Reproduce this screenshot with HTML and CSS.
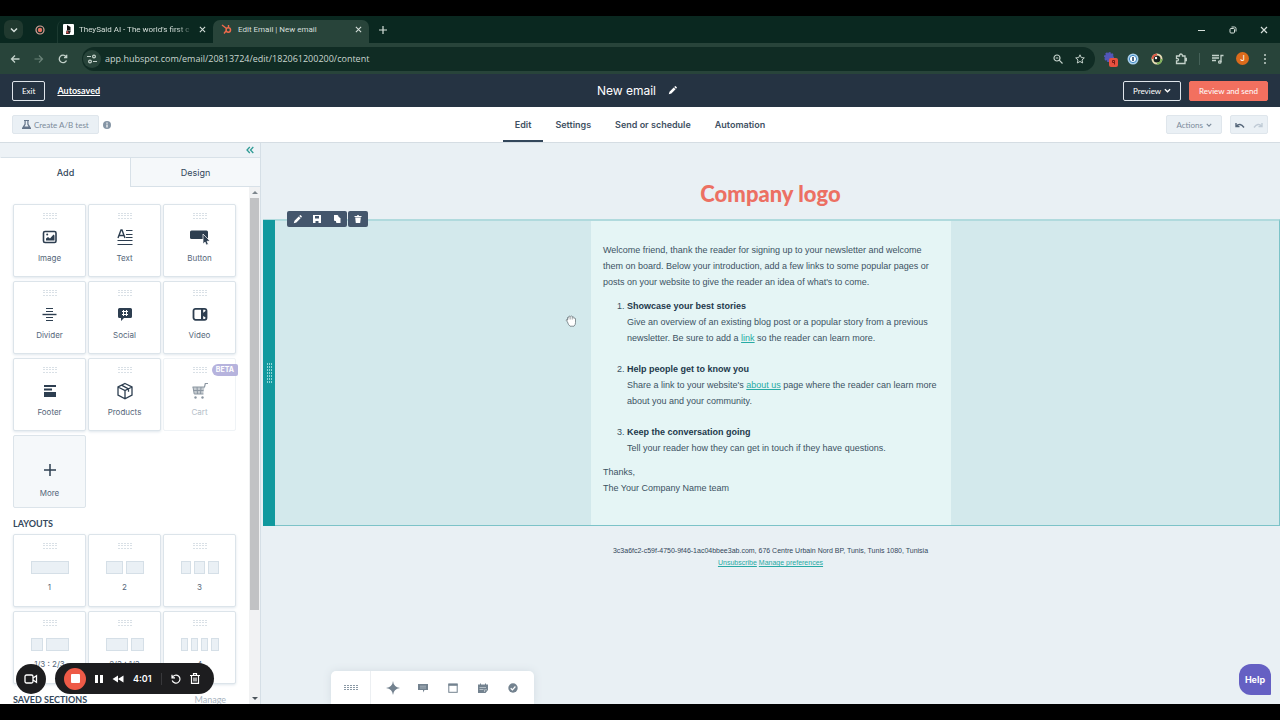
FILE: index.html
```html
<!DOCTYPE html>
<html lang="en">
<head>
    <meta charset="UTF-8">
    <meta name="viewport" content="width=device-width, initial-scale=1.0">
    <title>Edit Email | New email</title>
    <link rel="stylesheet" href="styles.css">
</head>
<body>
    <!-- Shared icons -->
    <svg class="sprite" aria-hidden="true">
        <symbol id="grip" viewBox="0 0 14 6">
            <path d="M0 .5h14M0 2.500h14M0 5.500h14" stroke="#d9e0e6" stroke-width="1" stroke-dasharray="2 1"/>
        </symbol>
        <symbol id="pencil" viewBox="0 0 12 12">
            <path d="M1 11l1-3.500 5.600-5.600 2.500 2.500L4.500 10zM8.300 1.200l1-.9q.7-.4 1.300.2l.9.9q.6.6.1 1.300l-.9 1z" fill="currentColor"/>
        </symbol>
        <symbol id="chevron" viewBox="0 0 8 8">
            <path d="M1 2.500l3 3 3-3" fill="none" stroke="currentColor" stroke-width="1.500"/>
        </symbol>
        <symbol id="close" viewBox="0 0 8 8">
            <path d="M1 1l6 6M7 1L1 7" stroke="currentColor" stroke-width="1.200"/>
        </symbol>
    </svg>

    <div class="tab-strip">
        <button class="tab-search" aria-label="Search tabs"><svg width="8" height="8"><use href="#chevron"/></svg></button>
        <svg class="pinned" width="10" height="10" viewBox="0 0 10 10"><circle cx="5" cy="5" r="4" fill="none" stroke="#d9a59c" stroke-width="1.200"/><circle cx="5" cy="5" r="2.200" fill="#e8705f"/></svg>
        <div class="tab">
            <svg width="11" height="11" viewBox="0 0 11 11"><rect width="11" height="11" rx="1" fill="#fff"/><path d="M4 1l3.500 2v3L4 6.500z" fill="#111"/><path d="M3.500 6.500h4.500L6.500 10H3z" fill="#222"/><path d="M3 9l1.500-2.500L6 9.500z" fill="#c44"/></svg>
            <span class="tab-title faded">TheySaid AI - The world's first c</span>
            <button aria-label="Close tab"><svg width="7" height="7"><use href="#close"/></svg></button>
        </div>
        <div class="tab active">
            <svg width="11" height="11" viewBox="0 0 11 11" fill="none" stroke="#ef6a4c"><path d="M1 1l4.500 3.500M7.500 1v2.500M5 7l-2 2.500" stroke-width="1.400"/><circle cx="7.300" cy="6" r="2.200" stroke-width="1.500"/></svg>
            <span class="tab-title">Edit Email | New email</span>
            <button aria-label="Close tab"><svg width="7" height="7"><use href="#close"/></svg></button>
        </div>
        <button class="new-tab" aria-label="New tab"><svg width="8" height="8" viewBox="0 0 8 8"><path d="M4 0v8M0 4h8" stroke="currentColor" stroke-width="1.200"/></svg></button>
        <div class="window-buttons">
            <button aria-label="Minimize"><svg width="8" height="8" viewBox="0 0 8 8"><path d="M0 4.500h7" stroke="currentColor"/></svg></button>
            <button aria-label="Restore"><svg width="8" height="8" viewBox="0 0 8 8" fill="none" stroke="currentColor"><rect x="1" y="2.500" width="4.500" height="4.500" rx="1"/><path d="M2.500 1h3q1.500 0 1.500 1.500v3"/></svg></button>
            <button aria-label="Close"><svg width="8" height="8"><use href="#close"/></svg></button>
        </div>
    </div>

    <div class="browser-bar">
        <button aria-label="Back"><svg width="10" height="10" viewBox="0 0 10 10" fill="none" stroke="currentColor" stroke-width="1.300"><path d="M9.500 5H1.500M5 1.500L1.500 5 5 8.500"/></svg></button>
        <button class="dim" aria-label="Forward"><svg width="10" height="10" viewBox="0 0 10 10" fill="none" stroke="currentColor" stroke-width="1.200"><path d="M.5 5h8M5 1.500L8.500 5 5 8.500"/></svg></button>
        <button aria-label="Reload"><svg width="10" height="10" viewBox="0 0 10 10" fill="none" stroke="currentColor" stroke-width="1.300"><path d="M8.500 6.500A3.800 3.800 0 1 1 8 2.500M8.700.8v2.700H6"/></svg></button>
        <div class="address">
            <span class="site-info"><svg width="10" height="10" viewBox="0 0 10 10" fill="none" stroke="currentColor" stroke-width="1.200"><path d="M0 2.500h4M6 7.500h4"/><circle cx="7" cy="2.500" r="1.400"/><circle cx="3" cy="7.500" r="1.400"/></svg></span>
            <input type="text" aria-label="Address" value="app.hubspot.com/email/20813724/edit/182061200200/content">
            <button aria-label="Zoom"><svg width="10" height="10" viewBox="0 0 10 10" fill="none" stroke="currentColor" stroke-width="1.200"><circle cx="4" cy="4" r="3"/><path d="M6.200 6.200l3.300 3.300M2.700 4h2.600"/></svg></button>
            <button aria-label="Bookmark"><svg width="10" height="10" viewBox="0 0 10 10" fill="none" stroke="currentColor"><path d="M5 .8l1.300 2.800 3 .3L7 6l.7 3L5 7.500 2.300 9 3 6 .7 3.900l3-.3z"/></svg></button>
        </div>
        <div class="extensions">
            <svg class="badged" width="16" height="16" viewBox="0 0 16 16"><circle cx="6" cy="6" r="4" fill="#5357b8" stroke="#5357b8" stroke-dasharray="2 1" stroke-width="2"/><rect x="6" y="7" width="9" height="9" rx="2" fill="#e8503f"/><path d="M9.500 9.500h2v4M9.500 9.500v2h2" fill="none" stroke="#7a1c16"/></svg>
            <svg width="12" height="12" viewBox="0 0 12 12"><circle cx="6" cy="6" r="5.500" fill="#a9d0ec"/><circle cx="6" cy="6" r="3.600" fill="#fff" stroke="#3b86c4"/><path d="M6 4v4" stroke="#17395c" stroke-width="1.500"/></svg>
            <svg width="12" height="12" viewBox="0 0 12 12"><circle cx="6" cy="6" r="4.500" fill="#16231f" stroke="#e6dcb4" stroke-width="2"/><path d="M1.500 6A4.500 4.500 0 0 1 6 1.500" fill="none" stroke="#dc5a47" stroke-width="2"/><path d="M10.500 6A4.500 4.500 0 0 1 6 10.500" fill="none" stroke="#7db35a" stroke-width="2"/><circle cx="5" cy="5" r="1.200" fill="#fff"/></svg>
            <svg width="12" height="12" viewBox="0 0 12 12" fill="none" stroke="#c4d2cb" stroke-width="1.300"><path d="M1.500 3h3q0-2 1.500-2t1.500 2H10v7.500H1.500V8q2 0 2-1.300t-2-1.200zM10 5.500h1.300v2H10"/></svg>
            <i class="divider"></i>
            <svg width="12" height="12" viewBox="0 0 12 12" fill="none" stroke="#c4d2cb" stroke-width="1.300"><path d="M0 2.500h7M0 5h7M0 7.500h4M9 9V2.500h2.500"/><circle cx="7.800" cy="9" r="1.200"/></svg>
            <span class="avatar">J</span>
            <svg width="8" height="12" viewBox="0 0 8 12" fill="#c4d2cb"><circle cx="4" cy="2" r="1"/><circle cx="4" cy="6" r="1"/><circle cx="4" cy="10" r="1"/></svg>
        </div>
    </div>

    <header class="app-header">
        <div class="header-left">
            <button class="outline-btn">Exit</button>
            <a class="autosaved" href="#">Autosaved</a>
        </div>
        <h1>New email <svg width="9" height="9"><use href="#pencil"/></svg></h1>
        <div class="header-right">
            <button class="outline-btn">Preview <svg width="7" height="7"><use href="#chevron"/></svg></button>
            <button class="send-btn">Review and send</button>
        </div>
    </header>

    <div class="sub-header">
        <div class="sub-left">
            <button class="muted-btn"><svg width="9" height="9" viewBox="0 0 9 9" fill="#65758a"><path d="M2 0h5v1H6.500v3L9 8v1H0V8l2.500-4V1H2zM3.700 1v3.500L2.500 6.500h4L5.300 4.500V1z"/></svg>Create A/B test</button>
            <svg width="8" height="8" viewBox="0 0 8 8"><circle cx="4" cy="4" r="4" fill="#8595a5"/><path d="M4 3.500V6.500M4 1.500v1.200" stroke="#fff" stroke-width="1.200"/></svg>
        </div>
        <nav>
            <a class="current" href="#">Edit</a>
            <a href="#">Settings</a>
            <a href="#">Send or schedule</a>
            <a href="#">Automation</a>
        </nav>
        <div class="sub-right">
            <button class="muted-btn">Actions <svg width="6" height="6"><use href="#chevron"/></svg></button>
            <div class="history">
                <button aria-label="Undo"><svg width="10" height="8" viewBox="0 0 10 8" fill="none" stroke="#56677a" stroke-width="1.400"><path d="M1 2v3.500h3.500M1.200 5.300Q5 1 9 6.500"/></svg></button>
                <button aria-label="Redo"><svg width="10" height="8" viewBox="0 0 10 8" fill="none" stroke="#c0cbd6" stroke-width="1.400"><path d="M9 2v3.500H5.500M8.800 5.300Q5 1 1 6.500"/></svg></button>
            </div>
        </div>
    </div>

    <div class="workspace">
        <aside class="sidebar">
            <div class="collapse"><button aria-label="Collapse"><svg width="8" height="8" viewBox="0 0 8 8" fill="none" stroke="#2f9b95" stroke-width="1.300"><path d="M3.800 1L1 4l2.800 3M7.300 1L4.500 4l2.800 3"/></svg></button></div>
            <div class="side-tabs">
                <button class="selected">Add</button>
                <button>Design</button>
            </div>
            <div class="side-body">
                <div class="modules">
                    <div class="tiles">
                        <button class="tile"><svg class="grip"><use href="#grip"/></svg>
                            <svg class="icon" viewBox="0 0 20 20"><rect x="3.500" y="4.500" width="12.500" height="11" rx="1.500" fill="none" stroke="currentColor" stroke-width="1.600"/><path d="M6 13.500v-2l2-1.500 2 1.500 3.500-4 1 1v5z"/><circle cx="7.200" cy="7.500" r="1"/></svg>Image</button>
                        <button class="tile"><svg class="grip"><use href="#grip"/></svg>
                            <svg class="icon" viewBox="0 0 20 20" fill="none" stroke="currentColor"><path d="M3 11L6 3h1l3 8M4.300 8.500h4.400" stroke-width="1.400"/><path d="M11 3.500h6.500M11 7.500h6.500M11 10.500h6.500M2.500 13.500h15M2.500 17.500h15"/></svg>Text</button>
                        <button class="tile"><svg class="grip"><use href="#grip"/></svg>
                            <svg class="icon" viewBox="0 0 20 20"><rect x="0" y="3.500" width="18" height="8.500" rx="1.500"/><path d="M13 7l7 7-3 .3 1.300 2.900-2 .9-1.200-3-2.100 1.900z" stroke="#fff" stroke-width=".7"/></svg>Button</button>
                        <button class="tile"><svg class="grip"><use href="#grip"/></svg>
                            <svg class="icon" viewBox="0 0 20 20" fill="none" stroke="currentColor"><path d="M6 4.500h7M6 7.500h7M6 13.500h7M6 16.500h7"/><path d="M2.500 10.500h14" stroke-width="1.400"/></svg>Divider</button>
                        <button class="tile"><svg class="grip"><use href="#grip"/></svg>
                            <svg class="icon" viewBox="0 0 20 20"><path d="M4.500 4h11q1.500 0 1.500 1.500v7q0 1.500-1.500 1.500H9l-3 3v-3H4.500Q3 14 3 12.500v-7Q3 4 4.500 4z"/><path d="M8.500 6v6M11.500 6v6M7 7.500h6M7 10.500h6" stroke="#fff" stroke-width="1"/></svg>Social</button>
                        <button class="tile"><svg class="grip"><use href="#grip"/></svg>
                            <svg class="icon" viewBox="0 0 20 20"><rect x="3.500" y="4.800" width="13" height="11" rx="2" fill="none" stroke="currentColor" stroke-width="1.800"/><path d="M11 4.500h2.200v4.200L16 6.800v7l-2.800-1.900V16H11z"/></svg>Video</button>
                        <button class="tile"><svg class="grip"><use href="#grip"/></svg>
                            <svg class="icon" viewBox="0 0 20 20"><path d="M4 4h12v2H4zM4 7.500h8v2H4zM4 11h12v5H4z"/></svg>Footer</button>
                        <button class="tile"><svg class="grip"><use href="#grip"/></svg>
                            <svg class="icon" viewBox="0 0 20 20" fill="none" stroke="currentColor" stroke-width="1.300"><path d="M10 2.500l7 3.500v8l-7 3.700L3 14V6zM3 6l7 3.500L17 6M10 9.500v8M6.500 4.200l7 3.600v3"/></svg>Products</button>
                        <button class="tile disabled" disabled><svg class="grip"><use href="#grip"/></svg>
                            <svg class="icon" viewBox="0 0 20 20"><path d="M2.500 6h12l.8-3.500H18" fill="none" stroke="currentColor" stroke-width="1.200"/><path d="M3 6h11.500l-1.300 7H4.200z" fill-opacity=".5"/><path d="M3 6l1.200 7h9.300M7 6l.5 7M11 6l-.5 7M3.500 9.500h10" fill="none" stroke="currentColor"/><circle cx="5.500" cy="16.500" r="1.200"/><circle cx="12.500" cy="16.500" r="1.200"/></svg>Cart
                            <span class="beta">BETA</span></button>
                        <button class="tile more">
                            <svg class="icon" viewBox="0 0 20 20"><path d="M10 4v12M4 10h12" stroke="currentColor" stroke-width="1.500"/></svg>More</button>
                    </div>

                    <h2>LAYOUTS</h2>
                    <div class="tiles">
                        <button class="tile layout"><svg class="grip"><use href="#grip"/></svg><span class="cols"><i></i></span>1</button>
                        <button class="tile layout"><svg class="grip"><use href="#grip"/></svg><span class="cols"><i></i><i></i></span>2</button>
                        <button class="tile layout"><svg class="grip"><use href="#grip"/></svg><span class="cols"><i></i><i></i><i></i></span>3</button>
                        <button class="tile layout"><svg class="grip"><use href="#grip"/></svg><span class="cols"><i></i><i class="wide"></i></span>1/3 : 2/3</button>
                        <button class="tile layout"><svg class="grip"><use href="#grip"/></svg><span class="cols"><i class="wide"></i><i></i></span>2/3 : 1/3</button>
                        <button class="tile layout"><svg class="grip"><use href="#grip"/></svg><span class="cols"><i></i><i></i><i></i><i></i></span>4</button>
                    </div>

                    <h2>SAVED SECTIONS <a href="#">Manage</a></h2>
                </div>
                <div class="scrollbar"><i class="up"></i><div class="thumb"></div><i class="down"></i></div>
            </div>
        </aside>

        <main class="canvas">
            <div class="logo">Company logo</div>

            <section class="section">
                <div class="drag-handle"><svg width="5" height="20" viewBox="0 0 5 20"><path d="M.5 0v20M2.500 0v20M4.500 0v20" stroke="#8fd6d7" stroke-width="1" stroke-dasharray="2 1"/></svg></div>
                <div class="section-tools">
                    <div class="tool-group">
                        <button aria-label="Edit section"><svg width="9" height="9"><use href="#pencil"/></svg></button>
                        <button aria-label="Save section"><svg width="8" height="8" viewBox="0 0 8 8"><path d="M0 0h8v8H0z" fill="currentColor"/><path d="M2 1h4v2.500H2zM2.500 6h3v2h-3z" fill="#44566c"/></svg></button>
                        <button aria-label="Clone section"><svg width="8" height="8" viewBox="0 0 8 8" fill="currentColor"><path d="M1 0h3.500l1 1v5H2Q1 6 1 5z"/><path d="M3 2h3l1.500 1.500V8H4Q3 8 3 7z"/></svg></button>
                    </div>
                    <div class="tool-group">
                        <button aria-label="Delete section"><svg width="8" height="8" viewBox="0 0 8 8" fill="currentColor"><path d="M.5 1H3l.5-1h1L5 1h2.500v1h-7zM1.200 2.500h5.600L6.200 8H1.800z"/></svg></button>
                    </div>
                </div>
                <article class="email-body">
                    <p>Welcome friend, thank the reader for signing up to your newsletter and welcome them on board. Below your introduction, add a few links to some popular pages or posts on your website to give the reader an idea of what's to come.</p>
                    <ol>
                        <li><strong>Showcase your best stories</strong><br>Give an overview of an existing blog post or a popular story from a previous newsletter. Be sure to add a <a href="#">link</a> so the reader can learn more.</li>
                        <li><strong>Help people get to know you</strong><br>Share a link to your website's <a href="#">about us</a> page where the reader can learn more about you and your community.</li>
                        <li><strong>Keep the conversation going</strong><br>Tell your reader how they can get in touch if they have questions.</li>
                    </ol>
                    <p>Thanks,<br>The Your Company Name team</p>
                </article>
                <svg class="hand" width="12" height="12" viewBox="0 0 12 12"><path d="M2.500 7L1 5.200q.5-1 1.500 0V2.500q.8-1 1.500 0V1.500q.9-1 1.700 0 .9-1 1.700 0v.7q1-.7 1.500.3v.8q1.200-.7 1.600.4v4q0 2-1.500 3.500H5Q3 9.500 2.500 7z" fill="#fff" stroke="#59666b" stroke-width=".7"/><path d="M4 2.500v2M5.700 2v2.500M7.400 2.200v2.300" stroke="#59666b" stroke-width=".5"/></svg>
            </section>

            <footer class="email-footer">
                3c3a6fc2-c59f-4750-9f46-1ac04bbee3ab.com, 676 Centre Urbain Nord BP, Tunis, Tunis 1080, Tunisia<br>
                <a href="#">Unsubscribe</a> <a href="#">Manage preferences</a>
            </footer>

            <div class="dock">
                <span class="dock-grip"><svg width="14" height="5" viewBox="0 0 14 5"><path d="M0 .5h14M0 2.500h14M0 4.500h14" stroke="#8b99a5" stroke-dasharray="2 1"/></svg></span>
                <button aria-label="AI assistant"><svg width="14" height="14" viewBox="0 0 14 14" fill="currentColor"><path d="M7 0q.5 6 7 7-6.500 1-7 7-.5-6-7-7 6.500-1 7-7z"/><path d="M7 3.500L10 7l-3 3.500L4 7z"/></svg></button>
                <button aria-label="Comments"><svg width="10" height="10" viewBox="0 0 10 10"><path d="M0 1h10v6H6.500L5 9.500V7H0z" fill="currentColor"/><path d="M2 3.200h6M2 5h6" stroke="#c7d0d7" stroke-width=".6"/></svg></button>
                <button aria-label="Calendar"><svg width="10" height="10" viewBox="0 0 10 10" fill="none" stroke="currentColor"><rect x=".8" y="1" width="8.400" height="8.300"/><path d="M.5 1.800h9" stroke-width="2"/></svg></button>
                <button aria-label="Notes"><svg width="10" height="10" viewBox="0 0 10 10"><path d="M0 1.500h2V.5h1v1h4v-1h1v1h2V7L7.500 10H0z" fill="currentColor"/><path d="M1.500 4.500h6.500M1.500 6.500h4M6.500 9V6.800H9" stroke="#dfe5ea" stroke-width=".6" fill="none"/></svg></button>
                <button aria-label="Tasks"><svg width="10" height="10" viewBox="0 0 10 10"><circle cx="5" cy="5" r="4.700" fill="currentColor"/><path d="M2.700 5.200l1.700 1.600 3-3.300" fill="none" stroke="#fff" stroke-width="1.200"/></svg></button>
            </div>
            <button class="help">Help</button>
        </main>

        <div class="recorder">
            <button class="camera" aria-label="Camera"><svg width="14" height="10" viewBox="0 0 14 10" fill="none" stroke="#fff" stroke-width="1.300"><rect x="1" y="1" width="8" height="8" rx="1.500"/><path d="M9 4l3.500-2.200v6.400L9 6"/></svg></button>
            <div class="controls">
                <button class="stop" aria-label="Stop"><i></i></button>
                <button aria-label="Pause"><svg width="8" height="8" viewBox="0 0 8 8" fill="#fff"><path d="M0 0h3v8H0zM5 0h3v8H5z"/></svg></button>
                <button aria-label="Rewind"><svg width="12" height="8" viewBox="0 0 12 8" fill="#fff"><path d="M6 .5v7L.5 4zM11.500.5v7L6 4z"/></svg></button>
                <span class="time">4:01</span>
                <i class="divider"></i>
                <button aria-label="Restart"><svg width="10" height="10" viewBox="0 0 10 10" fill="none" stroke="#fff" stroke-width="1.200"><path d="M1 .8v3h3M1.300 3.500A4 4 0 1 1 1.200 6.500"/></svg></button>
                <button aria-label="Discard"><svg width="10" height="11" viewBox="0 0 10 11" fill="none" stroke="#fff" stroke-width="1.200"><path d="M0 2.500h10M3.500 2V.7h3V2M1.500 3v7.300h7V3M4 4.500v4M6 4.500v4"/></svg></button>
            </div>
        </div>
    </div>
</body>
</html>
```
FILE: styles.css
```css
* {
    box-sizing: border-box;
}

body {
    margin: 0;
    padding: 16px 0;
    height: 100vh;
    display: flex;
    flex-direction: column;
    overflow: hidden;
    background-color: #000000;
    color: #33475b;
    font-family: Inter, "Open Sans", sans-serif;
    font-size: 8px;
}

button {
    margin: 0;
    padding: 0;
    border: 0;
    background: none;
    color: inherit;
    font: inherit;
    display: flex;
    align-items: center;
    justify-content: center;
    cursor: pointer;
}

svg {
    display: block;
    flex: none;
}

.sprite {
    position: absolute;
    width: 0;
    height: 0;
}

/* Browser */
.tab-strip {
    display: flex;
    align-items: center;
    flex: none;
    height: 27px;
    padding-left: 4px;
    background-color: #0a2820;
    color: #d5dfda;
    font-family: Roboto, sans-serif;
    font-size: 8px;
}

.tab-search {
    width: 19px;
    height: 19px;
    border-radius: 6px;
    background-color: #20392f;
}

.pinned {
    margin: 0 12px;
}

.tab {
    display: flex;
    align-items: center;
    gap: 5px;
    width: 156px;
    height: 23px;
    margin-top: 4px;
    padding: 0 7px 4px 5px;
    border-radius: 7px 7px 0 0;
}

.tab:not(.active) {
    border-left: 1px solid #1c3a31;
}

.tab.active {
    gap: 6px;
    padding-left: 8px;
    background-color: #28443a;
}

.tab-title {
    flex: 1;
    white-space: nowrap;
}

.faded {
    -webkit-mask-image: linear-gradient(to right, #000 85%, transparent);
    mask-image: linear-gradient(to right, #000 85%, transparent);
}

.new-tab {
    margin-left: 10px;
}

.window-buttons {
    display: flex;
    gap: 23px;
    margin-left: auto;
    padding-right: 12px;
}

.browser-bar {
    display: flex;
    align-items: center;
    flex: none;
    gap: 14px;
    height: 31px;
    padding: 0 11px 0 10px;
    background-color: #28443a;
    color: #c4d2cb;
}

.browser-bar .dim {
    color: #6b8379;
}

.address {
    display: flex;
    align-items: center;
    flex: 1;
    gap: 12px;
    height: 24px;
    margin-right: -6px;
    padding: 0 10px 0 1px;
    border-radius: 12px;
    background-color: #102c24;
}

.site-info {
    display: grid;
    place-items: center;
    width: 18px;
    height: 18px;
    margin-right: -8px;
    border-radius: 50%;
    background-color: #28443a;
}

.address input {
    flex: 1;
    min-width: 0;
    padding: 0;
    border: 0;
    outline: 0;
    background: none;
    color: #c9d6d0;
    font-family: "Open Sans", sans-serif;
    font-size: 9px;
}

.extensions {
    display: flex;
    align-items: center;
    gap: 12px;
}

.badged {
    margin-right: -4px;
}

.divider {
    width: 1px;
    height: 12px;
    background-color: #456158;
}

.avatar {
    width: 13px;
    height: 13px;
    border-radius: 50%;
    background-color: #dc6b1c;
    color: #ffffff;
    line-height: 13px;
    text-align: center;
}

/* App header */
.app-header,
.sub-header {
    display: grid;
    grid-template-columns: 1fr auto 1fr;
    align-items: center;
    flex: none;
    padding: 0 12px;
}

.app-header {
    height: 33px;
    background-color: #253342;
    color: #ffffff;
}

.header-left,
.header-right,
.sub-left,
.sub-right {
    display: flex;
    align-items: center;
    gap: 8px;
}

.header-left {
    gap: 12px;
}

.header-right,
.sub-right {
    justify-content: flex-end;
}

.app-header h1 {
    display: flex;
    align-items: center;
    gap: 12px;
    margin: 0;
    padding-right: 6px;
    font-size: 12px;
    font-weight: 400;
}

.outline-btn,
.send-btn,
.muted-btn {
    gap: 3px;
    height: 20px;
    padding: 0 9px;
    border: 1px solid #dfe5eb;
    border-radius: 2px;
    font-family: Lato, sans-serif;
}

.send-btn {
    border-color: #f2705f;
    background-color: #f2705f;
}

.autosaved {
    color: #ffffff;
    font-family: Lato, sans-serif;
    font-size: 9px;
    font-weight: 700;
}

.sub-header {
    height: 36px;
    border-bottom: 1px solid #d5dde3;
    background-color: #ffffff;
}

.sub-left {
    gap: 4px;
}

.muted-btn {
    height: 19px;
    border-color: #dfe6ec;
    background-color: #eaf0f5;
    color: #7c8b9b;
}

.history {
    display: flex;
    height: 19px;
    border: 1px solid #dfe6ec;
    border-radius: 2px;
    background-color: #eaf0f5;
}

.history button {
    width: 18px;
}

.sub-header nav {
    display: flex;
    align-self: stretch;
}

.sub-header nav a {
    height: 35px;
    padding: 0 12px;
    border-bottom: 2px solid transparent;
    color: #3f5163;
    font-size: 9px;
    font-weight: 600;
    line-height: 35px;
    text-decoration: none;
}

.sub-header nav .current {
    border-color: #33475b;
}

/* Sidebar */
.workspace {
    position: relative;
    display: flex;
    flex: 1;
    min-height: 0;
    background-color: #e9f0f4;
}

.sidebar {
    display: flex;
    flex-direction: column;
    flex: none;
    width: 261px;
    border-right: 1px solid #d5dfe6;
    background-color: #ffffff;
}

.collapse {
    display: flex;
    justify-content: flex-end;
    flex: none;
    height: 14px;
    padding-right: 6px;
    background-color: #edf2f6;
}

.side-tabs {
    display: flex;
    flex: none;
    height: 30px;
}

.side-tabs button {
    flex: 1;
    border: 1px solid #d8e1e8;
    border-right: 0;
    background-color: #f5f8fa;
    font-size: 9px;
}

.side-tabs .selected {
    border-color: #d8e1e8 transparent transparent;
    background-color: #ffffff;
    font-weight: 500;
}

.side-body {
    display: flex;
    flex: 1;
    min-height: 0;
}

.modules {
    flex: 1;
    padding: 17px 13px 0;
    overflow: hidden;
}

.tiles {
    display: grid;
    grid-template-columns: repeat(3, 73px);
    gap: 4px 2px;
}

.tile {
    position: relative;
    flex-direction: column;
    justify-content: flex-start;
    height: 73px;
    padding-top: 8px;
    border: 1px solid #dce4ea;
    border-radius: 2px;
    background-color: #ffffff;
    box-shadow: 0 1px 3px #dfe6ec;
    color: #56677a;
    line-height: 10px;
}

.grip {
    width: 14px;
    height: 6px;
}

.icon {
    width: 20px;
    height: 20px;
    margin: 8px 0 6px;
    fill: currentColor;
    color: #2d3e50;
}

.icon[fill="none"] {
    fill: none;
}

.tile.disabled {
    border-color: #eff3f6;
    box-shadow: none;
    color: #b4bec8;
}

.disabled .icon {
    color: #8c97a2;
}

.beta {
    position: absolute;
    top: 5px;
    right: -3px;
    padding: 1px 4px;
    border-radius: 6px 2px 2px 6px;
    background-color: #b6b3dd;
    color: #ffffff;
    font-size: 7px;
    font-weight: 700;
}

.tile.more {
    padding-top: 16px;
    background-color: #f5f8fa;
    box-shadow: none;
}

.more .icon {
    margin-bottom: 8px;
}

.cols {
    display: flex;
    gap: 3px;
    width: 38px;
    height: 13px;
    margin: 12px 0 8px;
}

.cols i {
    flex: 1;
    border: 1px solid #d5dfe7;
    background-color: #eaf0f5;
}

.cols .wide {
    flex: 2;
}

.modules h2 {
    display: flex;
    justify-content: space-between;
    margin: 0;
    padding-top: 6px;
    font-family: Lato, sans-serif;
    font-size: 9px;
    font-weight: 700;
    line-height: 20px;
}

.modules h2 a {
    padding-right: 10px;
    color: #a9b5c1;
    font-weight: 400;
}

.scrollbar {
    display: flex;
    flex-direction: column;
    align-items: center;
    width: 11px;
    padding: 4px 1px;
    background-color: #f1f2f3;
}

.scrollbar .thumb {
    width: 9px;
    height: 81%;
    margin: 4px 0 auto;
    background-color: #c1c2c4;
}

.up,
.down {
    border: 3px solid transparent;
    border-top: 0;
    border-bottom: 3px solid #7d858c;
}

.down {
    border-top: 3px solid #4d555c;
    border-bottom: 0;
}

/* Canvas */
.canvas {
    position: relative;
    flex: 1;
    min-width: 0;
    overflow: hidden;
}

.logo {
    height: 76px;
    padding-top: 38px;
    color: #ec7063;
    font-family: Lato, sans-serif;
    font-size: 22px;
    font-weight: 900;
    line-height: 26px;
    text-align: center;
}

.section {
    position: relative;
    margin-left: 2px;
    border: 1px solid #7cc3c8;
    border-top: 2px solid #b0dadd;
    border-left: 0;
    background-color: #d3e9ec;
}

.drag-handle {
    position: absolute;
    top: -1px;
    bottom: -1px;
    left: 0;
    display: grid;
    place-items: center;
    width: 12px;
    background-color: #11999e;
}

.section-tools {
    position: absolute;
    top: -10px;
    left: 24px;
    display: flex;
    gap: 1px;
}

.tool-group {
    display: flex;
    border-radius: 2px;
    background-color: #44566c;
    color: #ffffff;
}

.tool-group button {
    width: 20px;
    height: 16px;
}

.email-body {
    width: 360px;
    margin: 0 auto;
    padding: 21px 12px 29px;
    background-color: #e5f5f5;
    color: #3c5263;
    font-family: "Liberation Sans", Arial, sans-serif;
    font-size: 9px;
    line-height: 16px;
}

.email-body p {
    margin: 0;
}

.email-body ol {
    margin: 8px 0;
    padding-left: 24px;
}

.email-body li + li {
    margin-top: 15px;
}

.email-body strong {
    color: #23394c;
}

.email-body a,
.email-footer a {
    color: #27aaa4;
}

.hand {
    position: absolute;
    top: 94px;
    left: 302px;
}

.email-footer {
    padding-top: 19px;
    color: #33475b;
    font-family: "Liberation Sans", Arial, sans-serif;
    font-size: 7px;
    line-height: 12px;
    text-align: center;
}

/* Floating bars */
.dock {
    position: absolute;
    bottom: 0;
    left: 70px;
    display: flex;
    align-items: center;
    width: 203px;
    height: 33px;
    padding-right: 6px;
    border-radius: 5px 5px 0 0;
    background-color: #ffffff;
    box-shadow: 0 0 8px #d3dce2;
    color: #73828f;
}

.dock-grip {
    display: grid;
    place-items: center;
    align-self: stretch;
    width: 40px;
    margin-right: 7px;
    border-right: 1px solid #eceff2;
}

.dock button {
    flex: 1;
}

.help {
    position: absolute;
    right: 9px;
    bottom: 9px;
    width: 32px;
    height: 31px;
    border-radius: 12px 12px 1px 12px;
    background-color: #6560c3;
    color: #ffffff;
    font-size: 9px;
    font-weight: 700;
}

.recorder {
    position: absolute;
    bottom: 10px;
    left: 16px;
    display: flex;
    align-items: center;
    gap: 9px;
}

.camera {
    width: 30px;
    height: 30px;
    border-radius: 50%;
    background-color: #1d1d1f;
}

.controls {
    display: flex;
    align-items: center;
    gap: 9px;
    height: 31px;
    padding: 0 14px 0 9px;
    border-radius: 16px;
    background-color: #1d1d1f;
    color: #ffffff;
}

.stop {
    width: 22px;
    height: 22px;
    border-radius: 50%;
    background-color: #ee5a47;
}

.stop i {
    width: 9px;
    height: 9px;
    border-radius: 1px;
    background-color: #ffffff;
}

.time {
    font-size: 9px;
    font-weight: 600;
}

.controls .divider {
    background-color: #38383b;
}
```
